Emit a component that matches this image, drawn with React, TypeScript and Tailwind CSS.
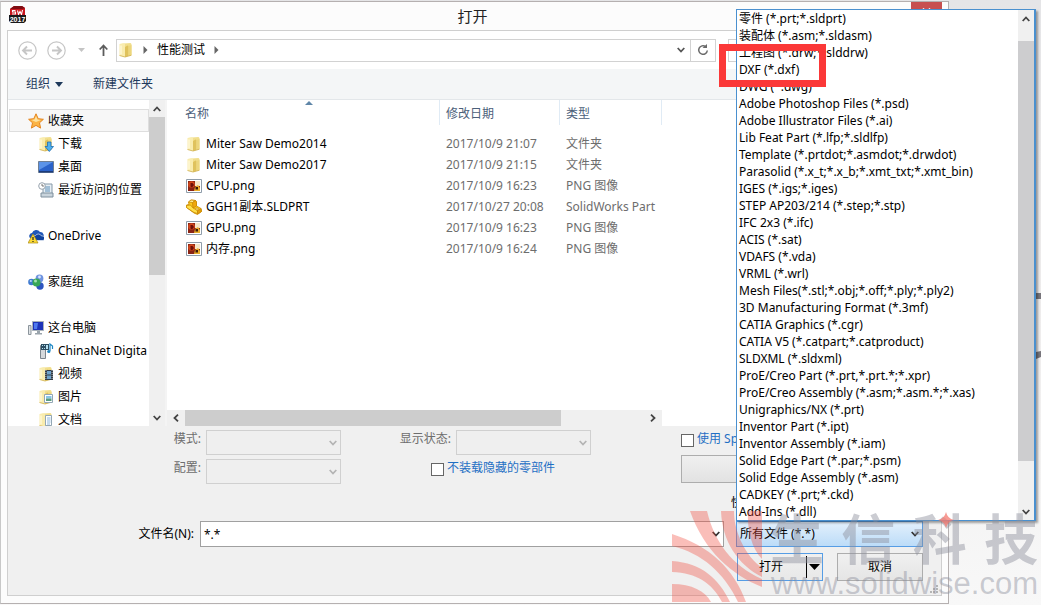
import type { ReactNode } from "react";
import clsx from "clsx";

const FILE_TYPES = [
  "零件 (*.prt;*.sldprt)",
  "装配体 (*.asm;*.sldasm)",
  "工程图 (*.drw;*.slddrw)",
  "DXF (*.dxf)",
  "DWG (*.dwg)",
  "Adobe Photoshop Files (*.psd)",
  "Adobe Illustrator Files (*.ai)",
  "Lib Feat Part (*.lfp;*.sldlfp)",
  "Template (*.prtdot;*.asmdot;*.drwdot)",
  "Parasolid (*.x_t;*.x_b;*.xmt_txt;*.xmt_bin)",
  "IGES (*.igs;*.iges)",
  "STEP AP203/214 (*.step;*.stp)",
  "IFC 2x3 (*.ifc)",
  "ACIS (*.sat)",
  "VDAFS (*.vda)",
  "VRML (*.wrl)",
  "Mesh Files(*.stl;*.obj;*.off;*.ply;*.ply2)",
  "3D Manufacturing Format (*.3mf)",
  "CATIA Graphics (*.cgr)",
  "CATIA V5 (*.catpart;*.catproduct)",
  "SLDXML (*.sldxml)",
  "ProE/Creo Part (*.prt,*.prt.*;*.xpr)",
  "ProE/Creo Assembly (*.asm;*.asm.*;*.xas)",
  "Unigraphics/NX (*.prt)",
  "Inventor Part (*.ipt)",
  "Inventor Assembly (*.iam)",
  "Solid Edge Part (*.par;*.psm)",
  "Solid Edge Assembly (*.asm)",
  "CADKEY (*.prt;*.ckd)",
  "Add-Ins (*.dll)",
];

const FILES = [
  { name: "Miter Saw Demo2014", date: "2017/10/9 21:07", type: "文件夹", icon: <FolderIcon /> },
  { name: "Miter Saw Demo2017", date: "2017/10/9 21:15", type: "文件夹", icon: <FolderIcon /> },
  { name: "CPU.png", date: "2017/10/9 16:23", type: "PNG 图像", icon: <PngIcon /> },
  { name: "GGH1副本.SLDPRT", date: "2017/10/27 20:08", type: "SolidWorks Part", icon: <PartIcon /> },
  { name: "GPU.png", date: "2017/10/9 16:23", type: "PNG 图像", icon: <PngIcon /> },
  { name: "内存.png", date: "2017/10/9 16:24", type: "PNG 图像", icon: <PngIcon /> },
];

const PLACES = [
  {
    label: "收藏夹",
    icon: <StarIcon />,
    selected: true,
    children: [
      { label: "下载", icon: <DownloadIcon /> },
      { label: "桌面", icon: <DesktopIcon /> },
      { label: "最近访问的位置", icon: <RecentIcon /> },
    ],
  },
  { label: "OneDrive", icon: <OneDriveIcon />, children: [] },
  { label: "家庭组", icon: <HomegroupIcon />, children: [] },
  {
    label: "这台电脑",
    icon: <ComputerIcon />,
    children: [
      { label: "ChinaNet Digita", icon: <MediaServerIcon /> },
      { label: "视频", icon: <VideoFolderIcon /> },
      { label: "图片", icon: <PictureFolderIcon /> },
      { label: "文档", icon: <DocFolderIcon /> },
    ],
  },
];

export default function App() {
  return (
    <div className="relative min-h-screen overflow-hidden bg-linear-to-b from-[#e5e5e7] via-[#eeecec] to-[#f8f8f8] pt-px pr-[92px] font-['Noto_Sans','Noto_Sans_CJK_SC',sans-serif] text-xs text-black">
      <BackgroundMarks />
      <main className="relative border border-[#b5b0b0] border-l-[#c8c8c8] bg-[#fcfcfc] px-[6px] pb-[7px]">
        <TitleBar />
        <div className="border border-[#cfcfcf] bg-white">
          <NavBar />
          <Toolbar />
          <div className="flex h-[326px]">
            <Sidebar />
            <FileList />
            <div className="flex-1 bg-white" />
          </div>
          <Footer />
        </div>
      </main>
      <Watermark />
    </div>
  );
}

function TitleBar() {
  return (
    <header className="relative flex h-7 items-center justify-center pr-1">
      <span className="absolute left-[2px] top-[4px]">
        <AppIcon />
      </span>
      <h1 className="text-[15px] leading-5 text-[#222]">打开</h1>
      <button
        aria-label="关闭"
        className="absolute right-0 top-0 flex h-5 w-[31px] items-center justify-center bg-[#c75050]"
      >
        <svg width="9" height="8" viewBox="0 0 9 8" stroke="#fff" strokeWidth="1.6">
          <path d="M1 0.5l7 7M8 0.5l-7 7" />
        </svg>
      </button>
    </header>
  );
}

function NavBar() {
  return (
    <nav className="flex h-[38px] items-center pl-[10px]">
      <button aria-label="后退" className="mr-[10px]">
        <RoundArrow />
      </button>
      <button aria-label="前进" className="mr-3 -scale-x-100">
        <RoundArrow />
      </button>
      <button aria-label="最近位置" className="mr-[14px]">
        <svg width="7" height="4" viewBox="0 0 7 4" fill="#c4c4c4">
          <path d="M0 0h7L3.5 4z" />
        </svg>
      </button>
      <button aria-label="上移" className="mr-2">
        <svg width="9" height="12" viewBox="0 0 9 12" fill="none" stroke="#5c5c5c" strokeWidth="1.8">
          <path d="M4.500 12V1.500M0.700 5.500l3.800-4 3.800 4" />
        </svg>
      </button>
      <div className="flex h-[23px] flex-1 items-center border border-[#d2d2d2] pl-px">
        <FolderIcon />
        <PathArrow />
        <button className="pl-[9px]">性能测试</button>
        <PathArrow />
        <button
          aria-label="历史记录"
          className="ml-auto flex h-full w-[19px] items-center justify-center border-r border-[#d2d2d2]"
        >
          <Chevron color="#555" />
        </button>
        <button aria-label="刷新" className="flex h-full w-6 items-center justify-center">
          <svg width="12" height="12" viewBox="0 0 12 12" fill="none" stroke="#6a6a6a" strokeWidth="1.5">
            <path d="M8.500 2.500A4.300 4.300 0 1 0 10.300 6.500" />
            <path d="M5.500 4h4.500V0z" fill="#6a6a6a" stroke="none" />
          </svg>
        </button>
      </div>
      <input
        aria-label="搜索"
        type="search"
        className="mx-3 h-[23px] w-[201px] border border-[#d2d2d2] bg-white px-2"
      />
    </nav>
  );
}

function Toolbar() {
  return (
    <div className="flex h-[31px] items-center gap-[30px] border-b border-[#e3e7ea] bg-[#f4f6f7] pl-[18px] text-[#1e395b]">
      <button className="flex items-center gap-[5px]">
        组织
        <svg width="8" height="5" viewBox="0 0 8 5" fill="#1e395b">
          <path d="M0 0h8L4 5z" />
        </svg>
      </button>
      <button>新建文件夹</button>
    </div>
  );
}

function Sidebar() {
  return (
    <aside className="flex w-[157px] shrink-0 overflow-hidden">
      <ul className="min-w-0 flex-1 pl-px pt-[9px]">
        {PLACES.map((place) => (
          <li key={place.label} className="mb-[23px]">
            <SidebarItem selected={place.selected} icon={place.icon}>
              {place.label}
            </SidebarItem>
            <ul>
              {place.children.map((child) => (
                <li key={child.label}>
                  <SidebarItem nested icon={child.icon}>
                    {child.label}
                  </SidebarItem>
                </li>
              ))}
            </ul>
          </li>
        ))}
      </ul>
      <div className="flex w-4 shrink-0 flex-col bg-[#f0f0f0]">
        <button aria-label="向上滚动" className="flex h-[17px] items-center justify-center">
          <Chevron className="rotate-180" />
        </button>
        <div className="h-[158px] bg-[#cdcdcd]" />
        <button aria-label="向下滚动" className="mt-auto flex h-[17px] items-center justify-center">
          <Chevron />
        </button>
      </div>
    </aside>
  );
}

interface SidebarItemProps {
  icon: ReactNode;
  children: ReactNode;
  selected?: boolean;
  nested?: boolean;
}

function SidebarItem({ icon, children, selected, nested }: SidebarItemProps) {
  return (
    <button
      className={clsx(
        "flex h-[23px] w-full items-center gap-1 border whitespace-nowrap",
        nested ? "pl-7" : "pl-[18px]",
        selected ? "border-[#dedede] bg-[#f7f7f7]" : "border-transparent"
      )}
    >
      {icon}
      {children}
    </button>
  );
}

function FileList() {
  return (
    <section className="flex w-[497px] shrink-0 flex-col border-l-2 border-[#f4f4f4]">
      <table className="w-full table-fixed text-left">
        <thead>
          <tr className="text-[#4c607a]">
            <th className="w-[272px] pb-2 font-normal">
              <div className="relative h-[25px] pl-[18px] leading-[27px]">
                名称
                <svg className="absolute left-[138px] top-px" width="8" height="4" viewBox="0 0 8 4" fill="#5f86a8">
                  <path d="M0 4h8L4 0z" />
                </svg>
              </div>
            </th>
            <th className="w-[120px] pb-2 font-normal">
              <div className="h-[25px] border-l border-[#e0ebf5] pl-[6px] leading-[27px]">修改日期</div>
            </th>
            <th className="pb-2 font-normal">
              <div className="h-[25px] border-x border-[#e0ebf5] pl-[6px] leading-[27px]">类型</div>
            </th>
          </tr>
        </thead>
        <tbody>
          {FILES.map((file) => (
            <tr key={file.name} className="h-[21px] text-[#6d6d6d]">
              <td>
                <div className="flex items-center gap-1 pl-[19px] text-black">
                  {file.icon}
                  {file.name}
                </div>
              </td>
              <td className="whitespace-nowrap pl-[7px]">{file.date}</td>
              <td className="whitespace-nowrap pl-[7px]">{file.type}</td>
            </tr>
          ))}
        </tbody>
      </table>
      <div className="mt-auto flex h-4 bg-[#f0f0f0]">
        <button aria-label="向左滚动" className="flex w-[18px] items-center justify-center">
          <Chevron className="rotate-90" />
        </button>
        <div className="w-[376px] bg-[#cdcdcd]" />
        <button aria-label="向右滚动" className="ml-auto flex w-[18px] items-center justify-center">
          <Chevron className="-rotate-90" />
        </button>
      </div>
    </section>
  );
}

function Footer() {
  return (
    <form className="relative bg-[#f0f0f0] pb-[14px] pt-1" onSubmit={(e) => e.preventDefault()}>
      <div className="flex h-[91px] pl-[141px]">
        <div className="flex flex-col gap-1">
          <DisabledSelect id="mode" label="模式:" />
          <DisabledSelect id="config" label="配置:" />
        </div>
        <div className="ml-[58px] flex flex-col gap-1">
          <DisabledSelect id="display-state" label="显示状态:" />
          <CheckBox id="skip-hidden" className="pl-8">
            不装载隐藏的零部件
          </CheckBox>
        </div>
        <div className="ml-[90px] flex flex-1 flex-col whitespace-nowrap pr-[18px]">
          <CheckBox id="speedpak">使用 Sp</CheckBox>
          <button
            type="button"
            aria-label="参考"
            className="h-7 border border-[#adadad] bg-linear-to-b from-[#f0f0f0] to-[#e2e2e2]"
          />
          <span className="mt-3 pl-[50px]">快</span>
        </div>
      </div>

      <div className="flex items-center pr-[18px]">
        <label htmlFor="filename" className="w-[192px] pr-[6px] text-right">
          文件名(N):
        </label>
        <div className="relative mr-3 flex-1">
          <input
            id="filename"
            defaultValue="*.*"
            className="block h-[26px] w-full border border-[#a0a0a0] bg-white px-[3px]"
          />
          <span className="absolute right-1 top-[10px]">
            <Chevron color="#333" />
          </span>
        </div>
        <FileTypePicker />
      </div>

      <div className="mt-[6px] flex justify-end gap-[14px] pr-[18px]">
        <div className="flex h-7 w-[86px] items-center border border-[#569de5] bg-linear-to-b from-[#f0f0f0] to-[#e8e8e8]">
          <button type="submit" className="h-full flex-1 pr-[2px]">
            打开
          </button>
          <button
            type="button"
            aria-label="打开选项"
            className="flex h-[22px] w-4 items-center justify-center border-l border-black"
          >
            <svg className="shrink-0" width="11" height="6" viewBox="0 0 11 6">
              <path d="M0 0h11L5.500 6z" />
            </svg>
          </button>
        </div>
        <button
          type="button"
          className="h-7 w-[86px] border border-[#adadad] bg-linear-to-b from-[#f0f0f0] to-[#e5e5e5]"
        >
          取消
        </button>
      </div>

      <svg className="absolute bottom-[2px] right-[3px]" width="8" height="8" viewBox="0 0 8 8" fill="#b5b5b5">
        <path d="M6 0h2v2H6zM3 3h2v2H3zM6 3h2v2H6zM0 6h2v2H0zM3 6h2v2H3zM6 6h2v2H6z" />
      </svg>
    </form>
  );
}

function DisabledSelect({ id, label }: { id: string; label: string }) {
  return (
    <div className="flex">
      <label
        htmlFor={id}
        className="w-[57px] shrink-0 whitespace-nowrap pr-[5px] text-right leading-[18px] text-[#6d6d6d]"
      >
        {label}
      </label>
      <div className="relative">
        <select
          id={id}
          disabled
          className="block h-[25px] w-[135px] appearance-none border border-[#d0d0d0] bg-[#efefef]"
        />
        <span className="absolute right-1 top-[10px]">
          <Chevron color="#b4b4b4" />
        </span>
      </div>
    </div>
  );
}

interface CheckBoxProps {
  id: string;
  children: ReactNode;
  className?: string;
}

function CheckBox({ id, children, className }: CheckBoxProps) {
  return (
    <div className={clsx("flex h-[25px] gap-[3px] text-[#1f6fc4]", className)}>
      <input
        id={id}
        type="checkbox"
        className="mt-1 size-[13px] shrink-0 appearance-none border border-[#666] bg-white"
      />
      <label htmlFor={id} className="leading-[18px]">
        {children}
      </label>
    </div>
  );
}

function FileTypePicker() {
  return (
    <div className="relative w-[187px]">
      <select
        aria-label="文件类型"
        className="block h-[26px] w-full appearance-none border border-[#569de5] bg-linear-to-b from-[#e3f0fc] to-[#bcdcf8] pl-[3px]"
      >
        <option>所有文件 (*.*)</option>
      </select>
      <span className="pointer-events-none absolute right-1 top-[10px]">
        <Chevron color="#333" />
      </span>

      {/* open list */}
      <div className="absolute bottom-full left-0 z-10 flex w-[300px] border border-r-2 border-[#4a90cf] bg-white shadow-[2px_2px_2px_rgba(0,0,0,0.35)]">
        <ul role="listbox" aria-label="文件类型" className="flex-1 whitespace-nowrap pl-[2px]">
          {FILE_TYPES.map((type) => (
            <li key={type} role="option" aria-selected={false} className="h-[17px] leading-[17px]">
              {type}
            </li>
          ))}
        </ul>
        <div className="flex w-4 flex-col bg-[#f0f0f0]">
          <button type="button" aria-label="向上滚动" className="flex h-[17px] items-center justify-center">
            <Chevron className="rotate-180" />
          </button>
          <div className="mt-[14px] h-[420px] bg-[#cdcdcf]" />
          <button type="button" aria-label="向下滚动" className="mt-auto flex h-[17px] items-center justify-center">
            <Chevron />
          </button>
        </div>
        {/* marks the DXF entry */}
        <div className="pointer-events-none absolute -left-[18px] top-[34px] h-[43px] w-[107px] border-7 border-[#fb3838]" />
      </div>
    </div>
  );
}

function Watermark() {
  return (
    <div className="pointer-events-none absolute bottom-[3px] right-[3px] z-20 flex w-[366px] items-end">
      <svg className="shrink-0" width="90" height="91" viewBox="0 0 90 91" fill="#f04a3c" fillOpacity="0.36">
        <path d="M0 73C20 73 33 80 39 91H0z" />
        <path d="M0 50C30 52 47 68 58 91H50C40 72 25 62 0 61z" />
        <path d="M0 23C38 35 62 58 74 91H66C52 62 30 42 0 35z" />
        <path d="M18 0H35C42 30 60 55 90 68V76C60 64 32 40 18 0z" />
        <path d="M49 0H62C62 22 74 45 90 57V66C66 54 50 30 49 0z" />
        <path d="M76 0H90V48C80 38 75 20 76 0z" />
      </svg>
      <div className="relative flex-1 pb-1 pl-2 text-[#8c8f9c]/45">
        <div className="flex justify-between text-[54px] font-bold leading-[54px]">
          <span>生</span>
          <span>信</span>
          <span>科</span>
          <span>技</span>
        </div>
        <p className="pt-1 text-right font-['Liberation_Sans',sans-serif] text-[31px] leading-[28px]">
          www.solidwise.com
        </p>
        <svg
          className="absolute left-[176px] top-0"
          width="16"
          height="16"
          viewBox="0 0 16 16"
          fill="#f47a70"
          fillOpacity="0.75"
        >
          <path d="M8 0Q9.500 6.500 16 8Q9.500 9.500 8 16Q6.500 9.500 0 8Q6.500 6.500 8 0z" />
        </svg>
      </div>
    </div>
  );
}

function BackgroundMarks() {
  return (
    <svg className="absolute right-0 top-[292px]" width="5" height="68" viewBox="0 0 5 68" fill="#77757b">
      <path d="M0 1h5v6H0zM0 60l5-1v6l-5 2z" />
    </svg>
  );
}

function Chevron({ className, color = "#444" }: { className?: string; color?: string }) {
  return (
    <svg className={className} width="8" height="6" viewBox="0 0 8 6" fill="none" stroke={color} strokeWidth="1.8">
      <path d="M0.700 1l3.300 3.500L7.300 1" />
    </svg>
  );
}

function PathArrow() {
  return (
    <svg className="ml-[9px]" width="5" height="8" viewBox="0 0 5 8" fill="#666">
      <path d="M0.500 0v8L4.500 4z" />
    </svg>
  );
}

function RoundArrow() {
  return (
    <svg width="19" height="19" viewBox="0 0 19 19" fill="none" stroke="#c6c6c6">
      <circle cx="9.500" cy="9.500" r="8.700" strokeWidth="1.2" />
      <path d="M14 9.500H5.500M9 5.500l-4 4 4 4" strokeWidth="1.9" />
    </svg>
  );
}

function AppIcon() {
  return (
    <svg width="17" height="17" viewBox="0 0 17 17">
      <path d="M1 3l4-3h8l3 2v9H1z" fill="#c8161d" />
      <path d="M1 3l4-3h8l3 2-3 1z" fill="#7d0d12" />
      <path
        d="M6.500 4.500H3.500v1.500h3v2H3M8.500 4.500l1 4 1.500-3 1.500 3 1-4.500"
        fill="none"
        stroke="#fff"
        strokeWidth="1.1"
      />
      <path d="M0 9h17v6l-2 2H2l-2-2z" fill="#191919" />
      <text x="8.500" y="15.500" textAnchor="middle" fontFamily="Liberation Sans" fontWeight="bold" fontSize="7" fill="#fff">
        2017
      </text>
    </svg>
  );
}

function FolderShape() {
  return (
    <>
      <path d="M6 1.500l6.500-.5 1 1v10.500l-1 1H6z" fill="#f1de8c" />
      <path d="M1.500 2l4-1 1.500 1v13l-5.500-1.500z" fill="#f9ecae" />
      <path d="M7 5l2.500-1.500 1 .5v10l-3.500 1z" fill="#dfc25c" />
      <path d="M10.500 4L13.500 3v10l-3 1z" fill="#ecd67d" />
      <path d="M3 3.500v9" stroke="#fffbe0" strokeWidth="1.2" />
      <path d="M1.500 13.500L7 15l6.500-1.800" fill="none" stroke="#cfae4a" strokeWidth="0.8" />
    </>
  );
}

function FolderIcon() {
  return (
    <svg className="shrink-0" width="16" height="16" viewBox="0 0 16 16">
      <FolderShape />
    </svg>
  );
}

function PngIcon() {
  return (
    <svg className="shrink-0" width="16" height="16" viewBox="0 0 16 16">
      <path d="M0.500 1.500h15v13H0.500z" fill="#fff" stroke="#8f9daa" />
      <path d="M2 3h12v10H2z" fill="#8a2414" />
      <path d="M9 3h5v5H9z" fill="#f6e6c8" />
      <circle cx="5.500" cy="6.500" r="3.300" fill="#d0451a" />
      <path d="M4.500 5h2l1.500 2-2 2.500-1.500-1z" fill="#6d0f08" />
      <path d="M8 13l1-4 3-2 2 3v3z" fill="#e9ad2a" />
      <path d="M9.500 9h2.500v2.500H9.500z" fill="#3b1a0b" />
    </svg>
  );
}

function PartIcon() {
  return (
    <svg
      className="shrink-0"
      width="16"
      height="16"
      viewBox="0 0 16 16"
      stroke="#c98a06"
      strokeWidth="0.8"
      strokeLinejoin="round"
    >
      <path d="M2.500 3L5 1l4.500.5L10.500 3v4l4.500 2.500.5 3-4 3L8 14 .5 8.500V6L3 5.500z" fill="#fbc91d" />
      <path d="M2.500 3L5 1l4.500.5-3 2z" fill="#fff09a" />
      <path d="M6.500 3.500l3-2 1 1.500v4L7 9z" fill="#f0a80e" />
      <path d="M.5 6.500l4-.5L7 9l4.500 2.500v3L8 13.500.5 8.500z" fill="#ffe04a" />
      <path d="M11.500 12l3.500-2.500.5 3-4 2.500z" fill="#e59f0a" />
      <ellipse cx="11" cy="10" rx="1.600" ry="1" fill="#fff7cf" />
    </svg>
  );
}

function StarIcon() {
  return (
    <svg className="shrink-0" width="16" height="16" viewBox="0 0 16 16">
      <path
        d="M8 0.800l2.200 4.900 5.200.6-3.900 3.500 1.100 5.300L8 12.400l-4.600 2.700 1.100-5.300L.6 6.300l5.200-.6z"
        fill="#fbb445"
        stroke="#e5851f"
      />
      <path d="M8 3l1.500 3.500 3.500.5-5 2-4.500-2 3-.5z" fill="#fee3a0" />
    </svg>
  );
}

function DownloadIcon() {
  return (
    <svg className="shrink-0" width="16" height="16" viewBox="0 0 16 16">
      <FolderShape />
      <path d="M9.500 6h3.500v4.500h2.500L11.300 15.500 7 10.500h2.500z" fill="#4fb0ee" stroke="#1c6db3" strokeWidth="0.8" />
    </svg>
  );
}

function DesktopIcon() {
  return (
    <svg className="shrink-0" width="16" height="16" viewBox="0 0 16 16">
      <path d="M0.500 2.500h15v11H0.500z" fill="#2a62c9" stroke="#6f7f93" />
      <path d="M1 3h14L1 11z" fill="#5b93e8" />
      <path d="M1 12h14v1.500H1z" fill="#1d3c7a" />
    </svg>
  );
}

function RecentIcon() {
  return (
    <svg className="shrink-0" width="16" height="16" viewBox="0 0 16 16">
      <path d="M5 2h9v10H5z" fill="#e6eef4" stroke="#8699a8" />
      <path d="M7 5h5M7 7h5M7 9h5" stroke="#5d8fb8" />
      <path d="M3 11h12v4H3z" fill="#c9d4dc" stroke="#7f909e" />
      <circle cx="4" cy="4" r="3.300" fill="#fff" stroke="#97a3ad" />
      <path d="M4 2v2h2" fill="none" stroke="#555" strokeWidth="0.8" />
    </svg>
  );
}

function OneDriveIcon() {
  return (
    <svg className="shrink-0" width="16" height="16" viewBox="0 0 16 16">
      <path d="M2 10a3 3 0 0 1 2-5A4.500 4.500 0 0 1 12 4a3.500 3.500 0 0 1 2 6.500z" fill="#1f57b8" />
      <path
        d="M7 12.500a2.500 2.500 0 0 1 .5-5A3.500 3.500 0 0 1 13.500 8a2.300 2.300 0 0 1 1.500 4.500z"
        fill="#0f429e"
        stroke="#fff"
        strokeWidth="0.6"
      />
      <path d="M5 6l5 9H0z" fill="#fbd934" stroke="#ab8a16" strokeWidth="0.7" />
      <path d="M5 9v3M5 13v1" stroke="#222" strokeWidth="1.2" />
    </svg>
  );
}

function HomegroupIcon() {
  return (
    <svg className="shrink-0" width="16" height="16" viewBox="0 0 16 16">
      <circle cx="11.500" cy="4.500" r="3.900" fill="#6f93e0" />
      <circle cx="3.500" cy="8" r="3.300" fill="#3f7ad0" />
      <circle cx="12" cy="12" r="3.700" fill="#2d55c0" />
      <circle cx="8.500" cy="8.500" r="4" fill="#38a758" />
      <circle cx="7.500" cy="7" r="1.500" fill="#a5e3b2" />
      <circle cx="11.500" cy="3" r="1.400" fill="#d5e6fa" />
      <circle cx="2.800" cy="7" r="1.100" fill="#b9d6f7" />
    </svg>
  );
}

function ComputerIcon() {
  return (
    <svg className="shrink-0" width="16" height="16" viewBox="0 0 16 16">
      <path d="M0.500 5.500h2.500v9H0.500z" fill="#dfe3e6" stroke="#8c959c" />
      <path d="M4.500 1.500h11v9h-11z" fill="#1d33b8" stroke="#a9b2ba" />
      <path d="M6 3h4l-1 6H6z" fill="#4e78ee" />
      <path d="M9 11h3v2h2v1.500H7V13h2z" fill="#9aa4ac" />
    </svg>
  );
}

function MediaServerIcon() {
  return (
    <svg className="shrink-0" width="16" height="16" viewBox="0 0 16 16">
      <path d="M2.500 2.500h5v13h-5z" fill="#d5d9dc" stroke="#7c868e" />
      <path d="M3 1h8v6H3z" fill="#2e4f63" />
      <path d="M4 2h1v1H4zM6 2h1v1H6zM4 5h1v1H4zM6 5h1v1H6zM8 2h2v4H8z" fill="#b7e0ef" />
      <path d="M12 8V1l2.500 2v3" fill="none" stroke="#1d87c4" strokeWidth="1.2" />
      <circle cx="10.800" cy="8.500" r="1.600" fill="#1d87c4" />
    </svg>
  );
}

function VideoFolderIcon() {
  return (
    <svg className="shrink-0" width="16" height="16" viewBox="0 0 16 16">
      <FolderShape />
      <path d="M7 4h8v10H7z" fill="#333d46" />
      <path d="M9 5h4v3.500H9zM9 9.500h4V13H9z" fill="#6fa3cc" />
      <path d="M7.900 4v10M14.100 4v10" stroke="#d7dde2" strokeWidth="0.8" strokeDasharray="1 1" />
    </svg>
  );
}

function PictureFolderIcon() {
  return (
    <svg className="shrink-0" width="16" height="16" viewBox="0 0 16 16">
      <FolderShape />
      <path d="M6.500 5.500h8v8h-8z" fill="#fff" stroke="#93a7b5" />
      <path d="M8 7h5.500v2.500H8z" fill="#86c5e8" />
      <path d="M8 9.500h5.500V12H8z" fill="#5a9d7f" />
    </svg>
  );
}

function DocFolderIcon() {
  return (
    <svg className="shrink-0" width="16" height="16" viewBox="0 0 16 16">
      <FolderShape />
      <path d="M7.500 3.500h6v10h-6z" fill="#fff" stroke="#93a7b5" />
      <path d="M9 6h3.500M9 8h3.500M9 10h3.500M9 12h3" stroke="#6ea4d6" strokeWidth="0.8" />
    </svg>
  );
}
